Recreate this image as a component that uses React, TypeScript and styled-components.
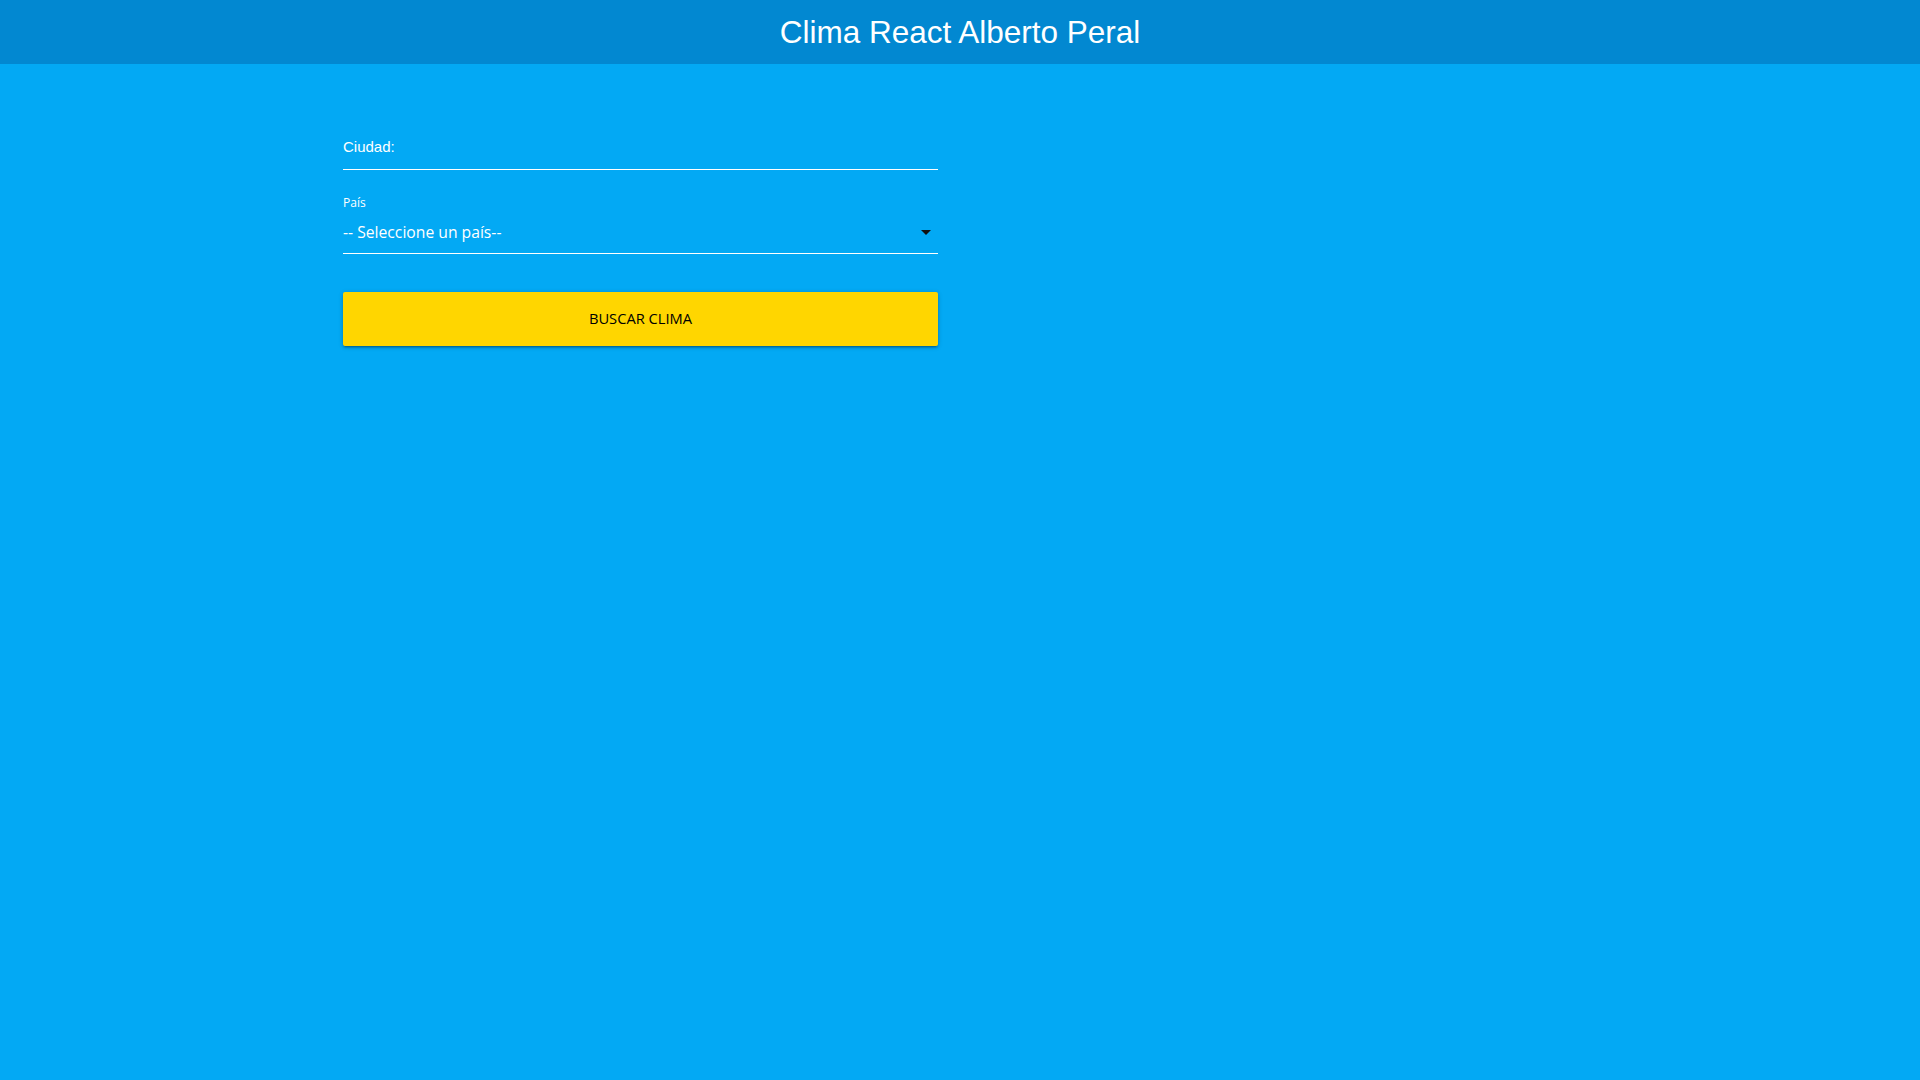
import React from "react"
import styled, { createGlobalStyle } from "styled-components"

const GlobalStyle = createGlobalStyle`
html, body {
  margin: 0;
  padding: 0;
  background-color: #03a9f4;
}
body {
  font-family: "Open Sans", "Noto Sans", sans-serif;
  min-height: 1080px;
}
* { box-sizing: border-box; }
`

const Header = styled.header`
height: 64px;
background-color: #0288d1;
display: flex;
align-items: center;
justify-content: center;
`

const Title = styled.h1`
margin: 0;
font-family: "Liberation Sans", Arial, sans-serif;
font-weight: 400;
font-size: 31.5px;
line-height: 64px;
color: #fff;
`

const Main = styled.main`
padding: 60px 0 0 343px;
`

const Form = styled.form`
width: 595px;
display: flex;
flex-direction: column;
`

const TextInput = styled.input`
height: 46px;
width: 100%;
border: none;
border-bottom: 1px solid #fff;
background: transparent;
padding: 0;
margin: 0;
outline: none;
color: #fff;
font-family: "Liberation Sans", Arial, sans-serif;
font-size: 15px;
&::placeholder { color: #fff; opacity: 1; }
`

const FieldLabel = styled.label`
margin-top: 26px;
display: block;
font-size: 12px;
line-height: 14px;
color: #fff;
`

const SelectWrap = styled.div`
position: relative;
height: 44px;
border-bottom: 1px solid #fff;
display: flex;
align-items: center;
`

const Select = styled.select`
appearance: none;
width: 100%;
height: 100%;
border: none;
background: transparent;
padding: 0;
outline: none;
color: #fff;
font-family: "Open Sans", "Noto Sans", sans-serif;
font-size: 15.7px;
`

const Caret = styled.svg`
position: absolute;
right: 0;
top: 10px;
pointer-events: none;
`

const Button = styled.button`
margin-top: 38px;
height: 54px;
width: 100%;
border: none;
border-radius: 2px;
background-color: #ffd600;
color: #000;
font-family: "Open Sans", "Noto Sans", sans-serif;
font-size: 14.7px;
line-height: 50px;
padding: 0 0 2px;
text-transform: uppercase;
cursor: pointer;
box-shadow: 0 2px 2px 0 rgba(0,0,0,.14), 0 3px 1px -2px rgba(0,0,0,.12), 0 1px 5px 0 rgba(0,0,0,.2);
`

const App: React.FC = () => {
  return (
    <>
      <GlobalStyle/>
      <Header>
        <Title>Clima React Alberto Peral</Title>
      </Header>
      <Main>
        <Form onSubmit={e => e.preventDefault()}>
          <TextInput type="text" placeholder="Ciudad:"/>
          <FieldLabel htmlFor="pais">País</FieldLabel>
          <SelectWrap>
            <Select id="pais" defaultValue="">
              <option value="">-- Seleccione un país--</option>
              <option value="US">Estados Unidos</option>
              <option value="MX">México</option>
              <option value="AR">Argentina</option>
              <option value="CO">Colombia</option>
              <option value="CR">Costa Rica</option>
              <option value="ES">España</option>
              <option value="PE">Perú</option>
            </Select>
            <Caret width="24" height="24" viewBox="0 0 24 24">
              <path d="M7 10l5 5 5-5z" fill="#111"/>
            </Caret>
          </SelectWrap>
          <Button type="submit">Buscar Clima</Button>
        </Form>
      </Main>
    </>
  )
}

export default App
